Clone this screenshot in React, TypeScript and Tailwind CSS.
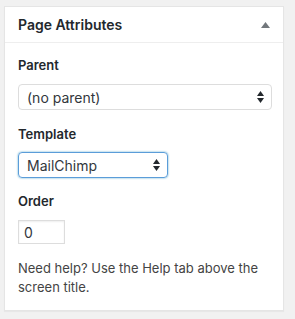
import React from "react";

const Arrows = () => (
  <svg width="7" height="12" viewBox="0 0 7 12" className="absolute right-[7px] top-1/2 -translate-y-1/2">
    <polygon points="3.5,0 7,5 0,5" fill="#23282d" />
    <polygon points="0,7 7,7 3.5,12" fill="#23282d" />
  </svg>
);

export default function App() {
  return (
    <div
      className="w-[295px] h-[319px] bg-[#f1f1f1] pt-[6px] pl-[4px] pr-[11px]"
      style={{ fontFamily: "Inter, 'Noto Sans', sans-serif" }}
    >
      <div className="bg-white border border-[#e5e5e5] shadow-[0_1px_1px_rgba(0,0,0,0.04)] h-[305px]">
        <div className="h-[36px] border-b border-[#eeeeee] flex items-center justify-between pl-[13px] pr-[13px]">
          <h2 className="text-[14px] font-semibold text-[#23282d] leading-[18px]">Page Attributes</h2>
          <svg width="9" height="6" viewBox="0 0 9 6" className="mr-[0px]">
            <polygon points="4.5,0 9,6 0,6" fill="#72777c" />
          </svg>
        </div>
        <div className="pl-[13px] pr-[11px] pb-[13px]">
          <div className="mt-[13px] text-[13px] leading-[18px] font-semibold text-[#23282d]">Parent</div>
          <div className="mt-[10px] relative h-[26px] w-full border border-[#dddddd] rounded-[4px] flex items-center pl-[8px] text-[14px] text-[#32373c]">
            (no parent)
            <Arrows />
          </div>
          <div className="mt-[15px] text-[13px] leading-[18px] font-semibold text-[#23282d]">Template</div>
          <div className="mt-[9px] relative h-[26px] w-[150px] border border-[#5b9dd9] shadow-[0_0_2px_rgba(30,140,190,0.8)] rounded-[4px] flex items-center pl-[8px] text-[14px] text-[#32373c]">
            MailChimp
            <Arrows />
          </div>
          <div className="mt-[14px] text-[13px] leading-[18px] font-semibold text-[#23282d]">Order</div>
          <div className="mt-[10px] h-[24px] w-[47px] border border-[#dddddd] shadow-[inset_0_1px_2px_rgba(0,0,0,0.07)] flex items-center pl-[5px] text-[14px] text-[#32373c]">
            0
          </div>
          <p className="mt-[15px] text-[13px] leading-[19px] text-[#444444]">
            Need help? Use the Help tab above the screen title.
          </p>
        </div>
      </div>
    </div>
  );
}
